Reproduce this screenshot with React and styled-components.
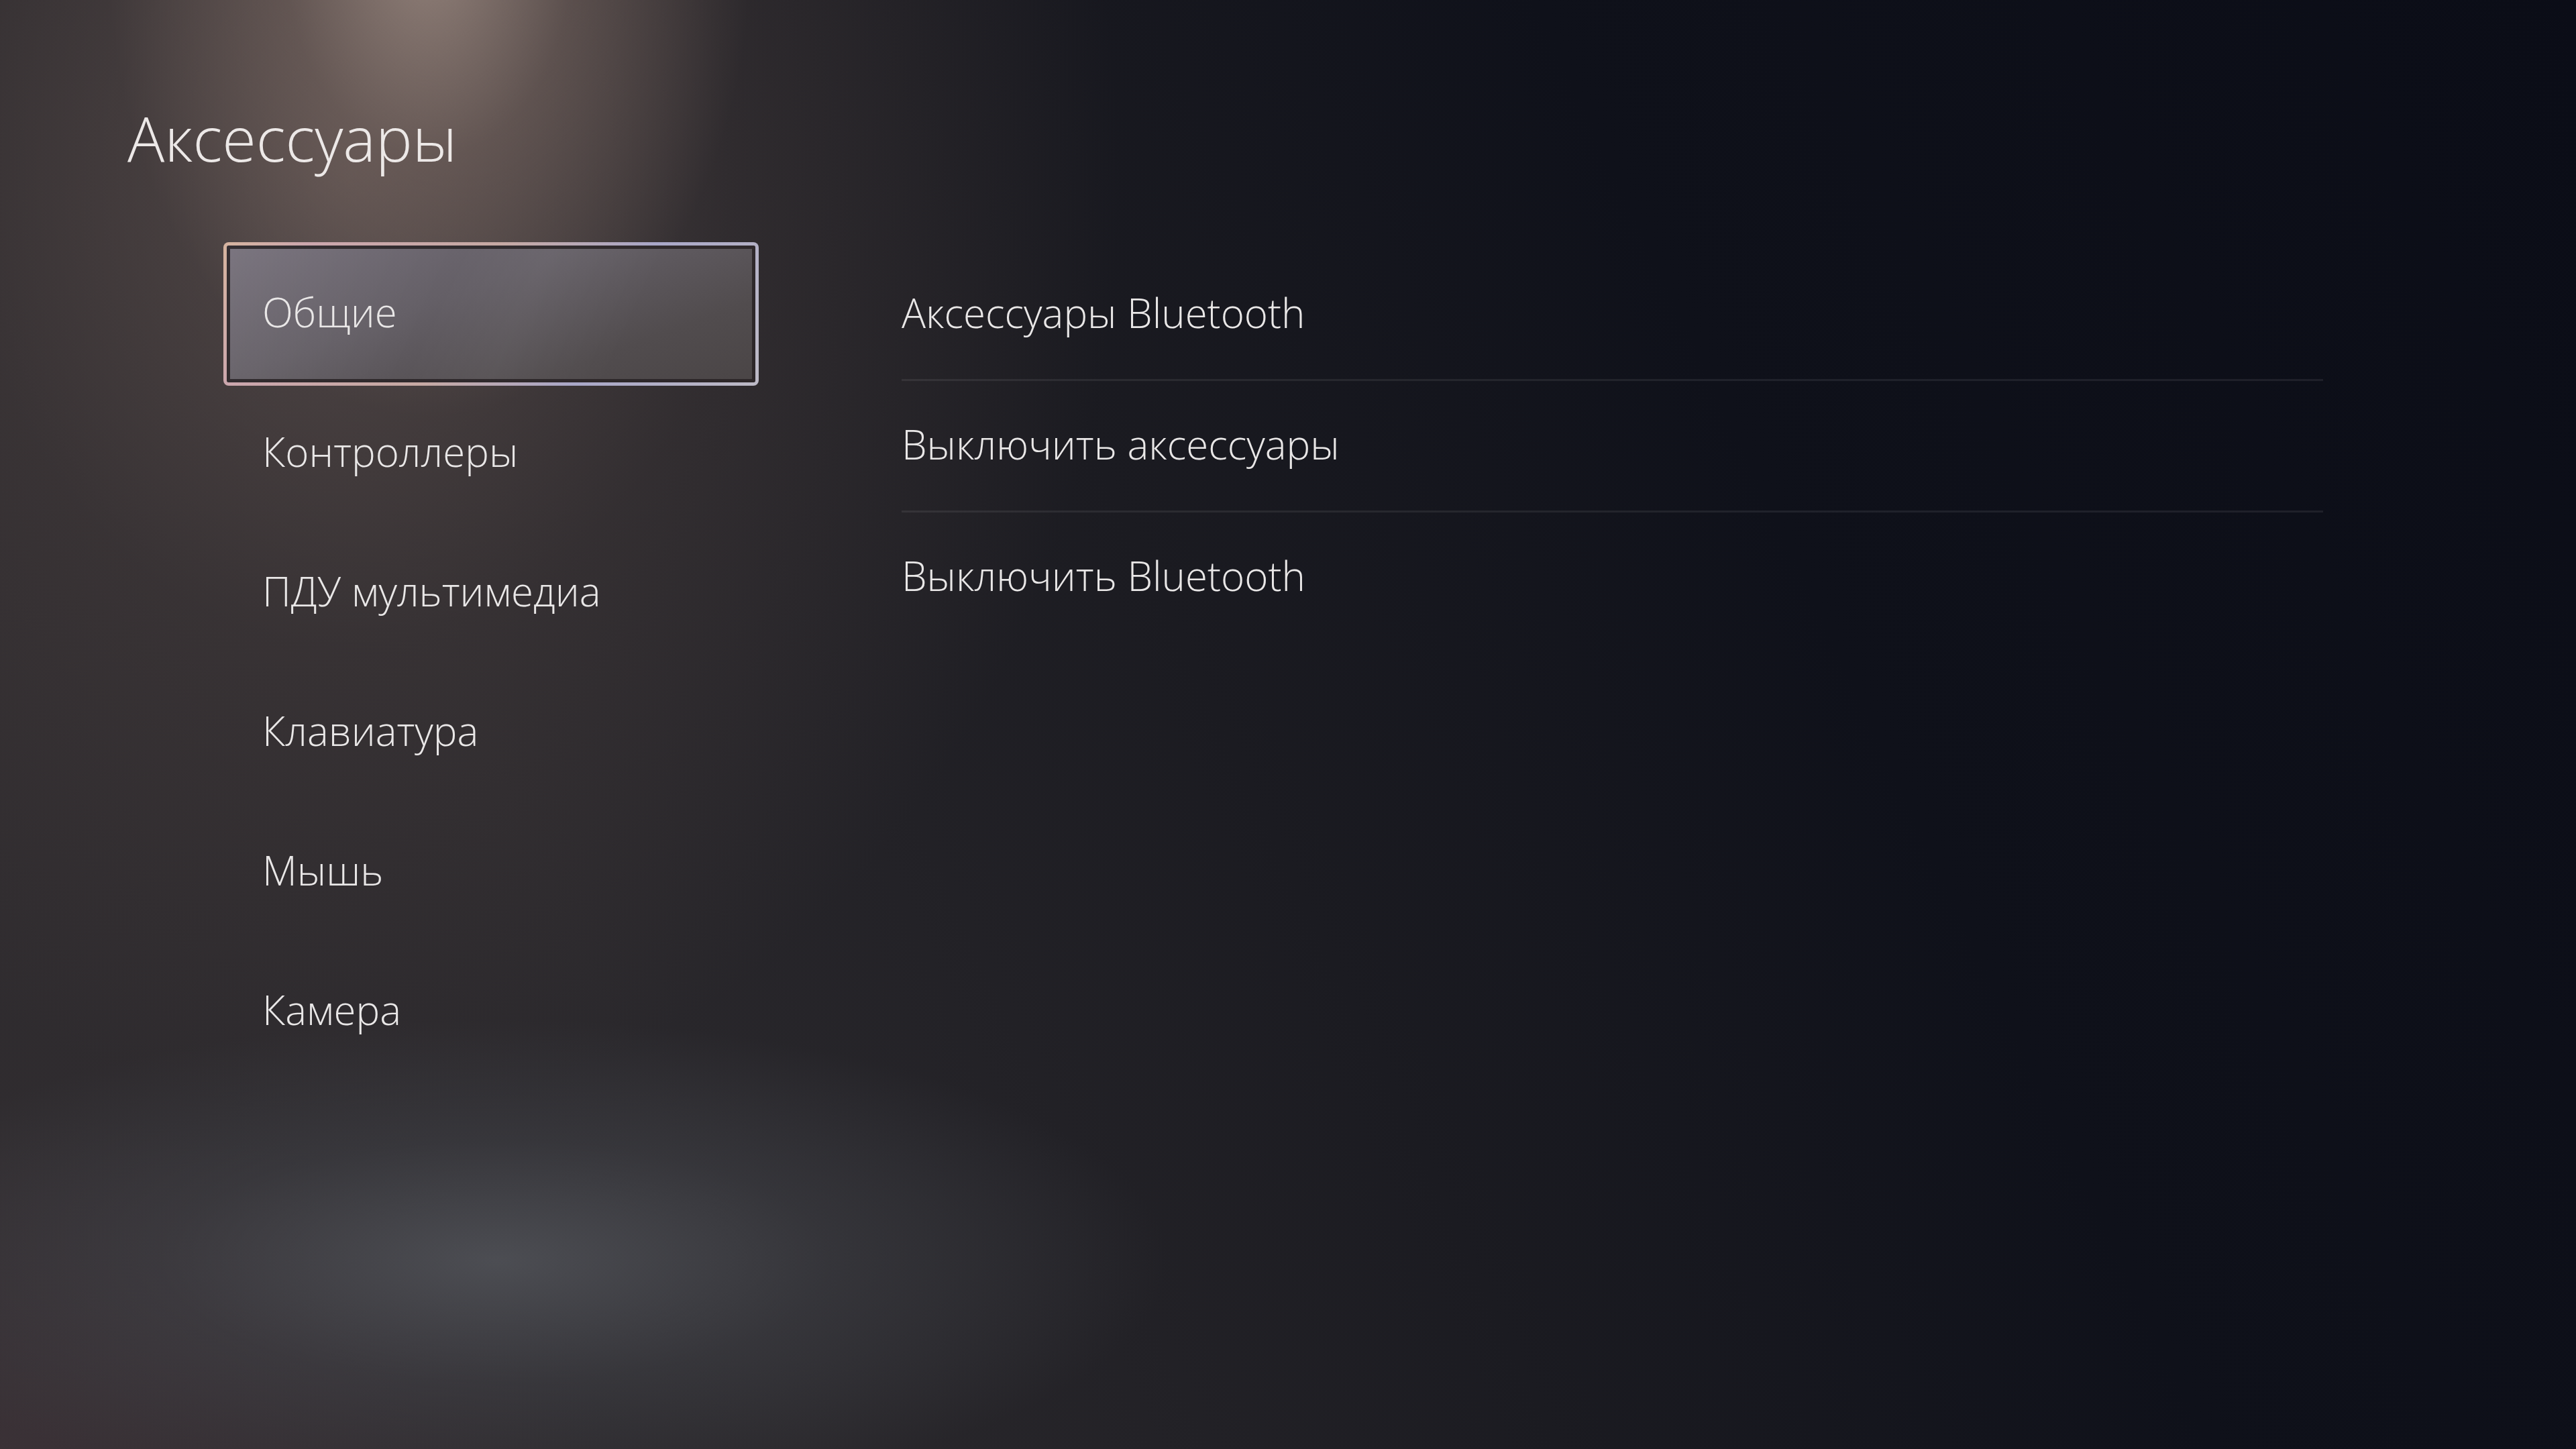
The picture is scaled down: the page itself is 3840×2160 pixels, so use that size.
import styled, { createGlobalStyle } from 'styled-components';

const GlobalStyle = createGlobalStyle`
    html, body {
        margin: 0;
        padding: 0;
        background: #111319;
    }
    * {
        box-sizing: border-box;
    }
`;

const Screen = styled.div`
    width: 3840px;
    height: 2160px;
    overflow: hidden;
    font-family: "Open Sans", "Noto Sans", sans-serif;
    font-weight: 300;
    color: #e9e7e7;
    background:
        radial-gradient(ellipse 1000px 360px at 740px 1880px, rgba(84, 86, 92, 0.8) 0%, rgba(72, 74, 80, 0.4) 50%, rgba(60, 60, 66, 0) 100%),
        radial-gradient(ellipse 480px 700px at 640px -80px, rgba(172, 152, 142, 0.75) 0%, rgba(140, 120, 112, 0.4) 45%, rgba(110, 95, 90, 0) 100%),
        radial-gradient(ellipse 1150px 1400px at 520px 260px, rgba(110, 94, 90, 0.6) 0%, rgba(84, 72, 70, 0.3) 50%, rgba(60, 52, 52, 0) 100%),
        radial-gradient(ellipse 900px 500px at 0px 2160px, rgba(70, 55, 62, 0.45) 0%, rgba(60, 50, 56, 0) 100%),
        linear-gradient(245deg, #0b0d17 0%, #0f111a 32%, #1b1b21 52%, #2a282c 75%, #312d30 100%);
`;

const Title = styled.h1`
    margin: 0;
    padding: 160px 0 0 190px;
    font-size: 92px;
    line-height: 1;
    font-weight: 300;
    color: #ece8e7;
`;

const Body = styled.div`
    display: flex;
    gap: 213px;
    padding: 112px 0 0 333px;
`;

const Menu = styled.div`
    width: 798px;
    display: flex;
    flex-direction: column;
`;

const MenuItem = styled.div`
    height: ${p => (p.$active ? '214px' : '208px')};
    margin: ${p => (p.$active ? '-3px 0' : '0')};
    display: flex;
    align-items: center;
    padding: 0 0 6px 53px;
    font-size: 60px;
    line-height: 1;
    border: 5px solid transparent;
    border-radius: 8px;
    ${p => p.$active && `
        background:
            linear-gradient(115deg, rgba(255,255,255,0.06) 0%, rgba(255,255,255,0) 40%, rgba(255,255,255,0.04) 55%, rgba(255,255,255,0) 75%) padding-box,
            linear-gradient(160deg, #736d78 0%, #645f66 40%, #514c4e 75%, #4a4546 100%) padding-box,
            linear-gradient(120deg, #d6b49f 0%, #cba6ad 14%, #c6a9a3 45%, #a9a7c8 70%, #b4b1c6 87%, #bdbac6 100%) border-box;
        box-shadow: inset 0 0 0 5px rgba(40, 34, 36, 0.85);
    `}
`;

const Options = styled.div`
    width: 2119px;
    display: flex;
    flex-direction: column;
    padding-top: 8px;
`;

const OptionRow = styled.div`
    height: 196px;
    display: flex;
    align-items: center;
    padding-bottom: 6px;
    font-size: 60px;
    line-height: 1;
    border-bottom: 3px solid ${p => (p.$last ? 'transparent' : 'rgba(255, 255, 255, 0.075)')};
`;

const menu = ['Общие', 'Контроллеры', 'ПДУ мультимедиа', 'Клавиатура', 'Мышь', 'Камера'];
const options = ['Аксессуары Bluetooth', 'Выключить аксессуары', 'Выключить Bluetooth'];

export default function App() {
    return (
        <Screen>
            <GlobalStyle />
            <Title>Аксессуары</Title>
            <Body>
                <Menu>
                    {menu.map((m, i) => (
                        <MenuItem key={m} $active={i === 0}>{m}</MenuItem>
                    ))}
                </Menu>
                <Options>
                    {options.map((o, i) => (
                        <OptionRow key={o} $last={i === options.length - 1}>{o}</OptionRow>
                    ))}
                </Options>
            </Body>
        </Screen>
    );
}
